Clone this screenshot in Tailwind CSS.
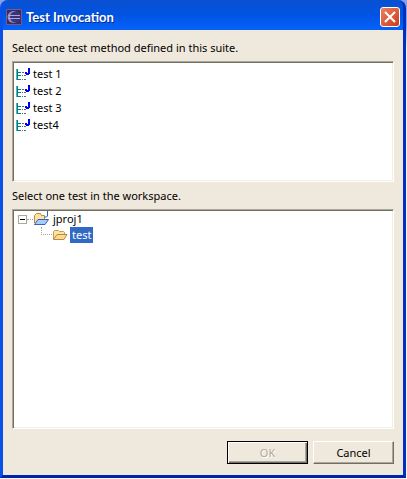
<!DOCTYPE html>
<html lang="en">
  <head>
    <meta charset="UTF-8" />
    <meta name="viewport" content="width=device-width, initial-scale=1.0" />
    <title>Test Invocation</title>
    <script src="https://cdn.jsdelivr.net/npm/@tailwindcss/browser@4"></script>
  </head>
  <body class="h-screen bg-linear-to-b from-[#8ba0e4] from-5% to-[#f4f4f4] to-10% pr-px pb-px font-['Noto_Sans','Open_Sans',sans-serif] text-[11px] leading-4 text-black">
    <!-- Shared icons -->
    <svg class="hidden">
      <symbol id="icon-test" viewBox="0 0 15 12" shape-rendering="crispEdges">
        <path fill="#4db8b8" d="M0 1h1v11h-1z" />
        <path fill="#008080" d="M1 1h1v11h-1zM2 4h3v1h-3zM2 7h3v1h-3zM2 11h3v1h-3z" />
        <path fill="#4a7070" d="M6 4h2v1h-2zM6 7h1v1h-1zM8 7h2v1h-2zM6 11h1v1h-1zM8 11h2v1h-2z" />
        <path fill="#0000f0" d="M12 0h2v6h-1v1h-3v-1h-1v-2h2v1h1z" />
      </symbol>
      <symbol id="icon-folder" viewBox="0 0 16 12">
        <path fill="#fbe3a0" stroke="#c8984c" d="M1.500 10V2.500l1-1h4l1 1h4l1 1V6" />
        <path fill="#fdd98a" stroke="#b8884c" d="M1.500 10.500L5 5.500h10L12 10.500z" />
      </symbol>
    </svg>

    <div role="dialog" aria-labelledby="title" class="flex h-full flex-col rounded-t-lg border-r-[3px] border-b-[3px] border-l-[3px] border-r-[#0030c0] border-b-[#0020b0] border-l-[#0850e8] bg-[#0850e8]">
      <!-- Title bar -->
      <header class="flex h-[30px] shrink-0 items-center gap-1 rounded-t-md bg-linear-to-b from-[#0a50d0] via-[#0054e3] to-[#0562fa] pt-1 pr-[3px] pl-[3px]">
        <svg class="size-4" viewBox="0 0 16 16">
          <rect width="16" height="16" fill="#3a2a66" />
          <path fill="none" stroke="#7a5a88" d="M.5 .5h15v15h-15z" />
          <circle cx="7.500" cy="8" r="6" fill="#8c8cc8" />
          <circle cx="9.500" cy="8" r="5.500" fill="#3c3478" />
          <path stroke="#a8a8dc" d="M2 6.500h12M2 9.500h12" />
        </svg>
        <h1 id="title" class="grow font-['Lato',sans-serif] text-[13px] font-bold text-white [text-shadow:1px_1px_#0a2a8c]">Test Invocation</h1>
        <button aria-label="Close" class="flex size-5 items-center justify-center rounded-[3px] border border-white bg-linear-to-br from-[#ec8060] to-[#cc3a14]">
          <svg class="size-3" viewBox="0 0 12 12">
            <path stroke="#fff" stroke-width="2" d="M1 1l10 10M11 1L1 11" />
          </svg>
        </button>
      </header>

      <main class="flex grow flex-col bg-[#efe8dc] px-[9px] pt-[10px] pb-[11px]">
        <h2 id="methods">Select one test method defined in this suite.</h2>
        <ul role="listbox" aria-labelledby="methods" class="mt-[5px] h-[121px] border border-t-[#aca899] border-r-white border-b-white border-l-[#aca899] bg-white px-[3px] py-[3px] inset-shadow-[1px_1px_#716f64,-1px_-1px_#f1efe2]">
          <li role="option" class="flex h-[17px] items-center gap-[2px]"><svg class="h-3 w-[15px]"><use href="#icon-test" /></svg>test 1</li>
          <li role="option" class="flex h-[17px] items-center gap-[2px]"><svg class="h-3 w-[15px]"><use href="#icon-test" /></svg>test 2</li>
          <li role="option" class="flex h-[17px] items-center gap-[2px]"><svg class="h-3 w-[15px]"><use href="#icon-test" /></svg>test 3</li>
          <li role="option" class="flex h-[17px] items-center gap-[2px]"><svg class="h-3 w-[15px]"><use href="#icon-test" /></svg>test4</li>
        </ul>

        <h2 id="workspace" class="mt-[6px]">Select one test in the workspace.</h2>
        <ul role="tree" aria-labelledby="workspace" class="mt-[5px] grow border border-t-[#aca899] border-r-white border-b-white border-l-[#aca899] bg-white py-px pl-[5px] shadow-[inset_1px_1px_#716f64,inset_-1px_-1px_#f1efe2]">
          <li role="treeitem" aria-expanded="true">
            <div class="flex h-4 items-center">
              <button aria-label="Collapse jproj1" class="flex size-[9px] items-center justify-center border border-[#aca899]"><span class="h-px w-[5px] bg-black"></span></button>
              <span class="w-[6px] border-t border-dotted border-[#aca899]"></span>
              <svg class="size-4" viewBox="0 0 16 16">
                <path fill="#fbe3a0" stroke="#c08a3c" d="M1.500 12V4.500l2-2h4l1 2h3V8" />
                <path fill="#a8ccf8" stroke="#3c5cc0" d="M1.500 13.500L5 8.500h10.500L12 13.500z" />
                <path fill="none" stroke="#2c64b0" d="M14.500 0v5l-1 1h-2" />
              </svg>
              <span class="px-1">jproj1</span>
            </div>
            <ul role="group">
              <li role="treeitem" aria-selected="true" class="flex h-4 items-center pl-[23px]">
                <span class="mb-auto h-2 w-[11px] border-b border-l border-dotted border-[#aca899]"></span>
                <svg class="h-3 w-4"><use href="#icon-folder" /></svg>
                <span class="ml-[2px] bg-[#316ac5] px-[2px] text-white">test</span>
              </li>
            </ul>
          </li>
        </ul>

        <!-- Buttons -->
        <footer class="mt-3 flex justify-end gap-[5px]">
          <button disabled class="h-[23px] w-[81px] border border-black text-[#aca899] shadow-[inset_1px_1px_#fff,inset_-1px_-1px_#716f64,inset_-2px_-2px_#aca899] [text-shadow:1px_1px_#fff]">OK</button>
          <button class="h-[23px] w-[81px] border border-t-white border-r-[#716f64] border-b-[#716f64] border-l-white shadow-[inset_-1px_-1px_#aca899]">Cancel</button>
        </footer>
      </main>
    </div>
  </body>
</html>
